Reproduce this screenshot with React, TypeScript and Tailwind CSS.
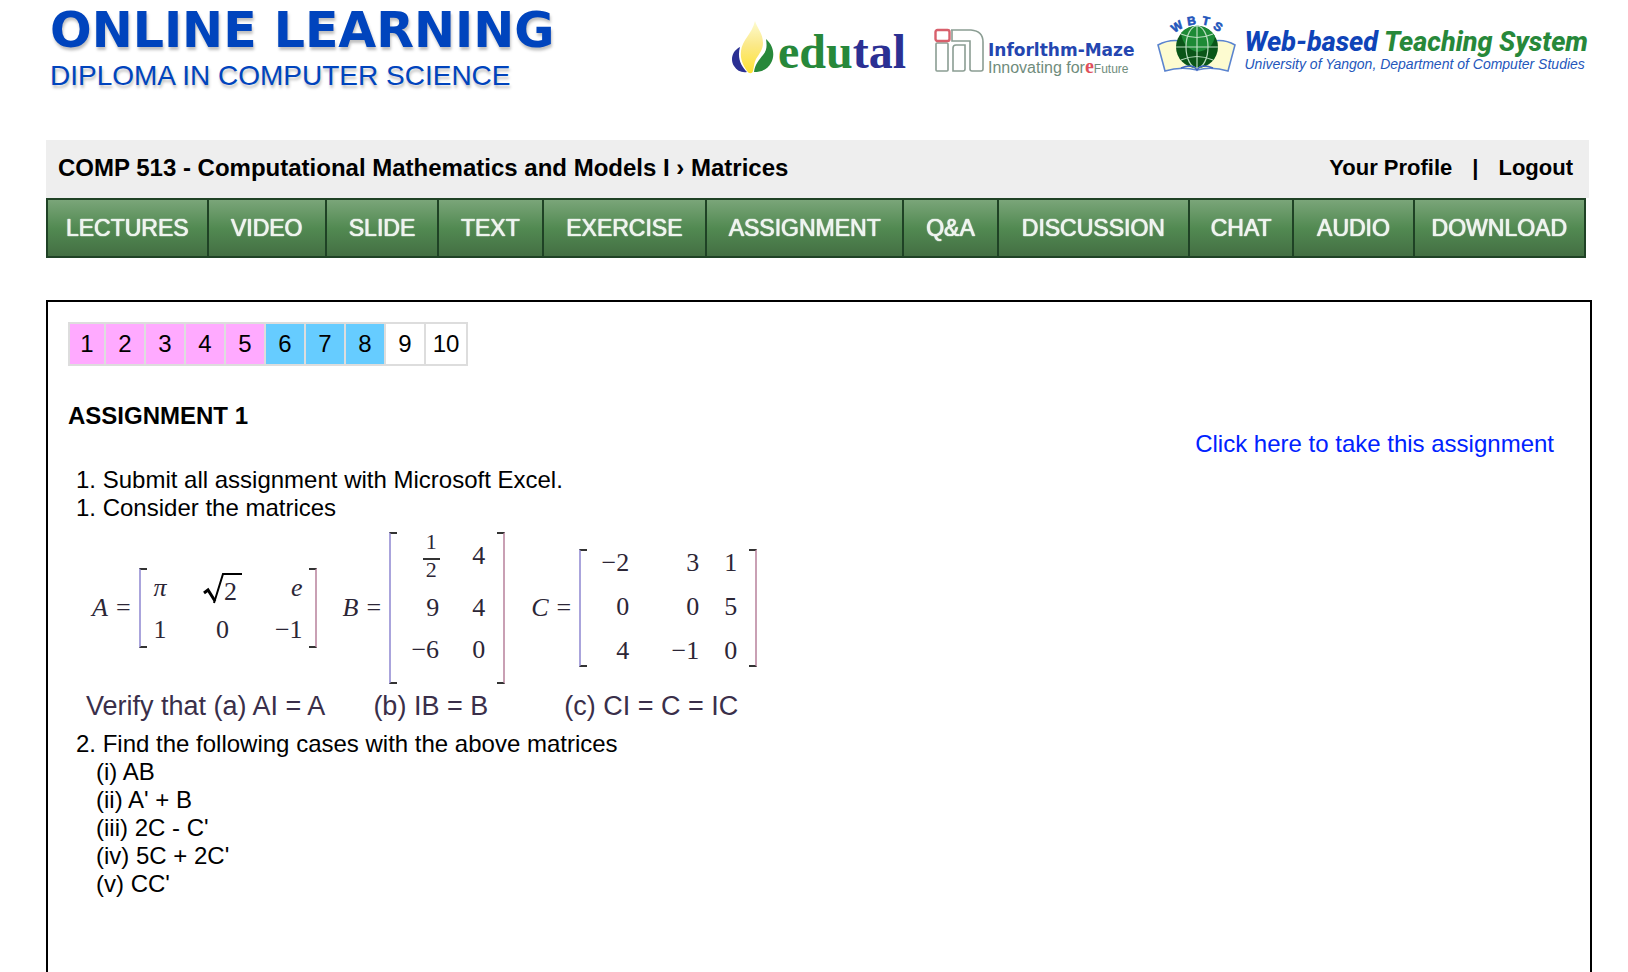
import type { ReactNode } from "react";

const tabs = [
  { label: "LECTURES", weight: 161 },
  { label: "VIDEO", weight: 118 },
  { label: "SLIDE", weight: 112 },
  { label: "TEXT", weight: 104 },
  { label: "EXERCISE", weight: 164 },
  { label: "ASSIGNMENT", weight: 198 },
  { label: "Q&A", weight: 94 },
  { label: "DISCUSSION", weight: 192 },
  { label: "CHAT", weight: 104 },
  { label: "AUDIO", weight: 120 },
  { label: "DOWNLOAD", weight: 172 },
];

const pages = [
  { n: 1, style: "w-[38px] bg-[#ffaaff]" },
  { n: 2, style: "w-[42px] bg-[#ffaaff]" },
  { n: 3, style: "w-[42px] bg-[#ffaaff]" },
  { n: 4, style: "w-[42px] bg-[#ffaaff]" },
  { n: 5, style: "w-[42px] bg-[#ffaaff]" },
  { n: 6, style: "w-[42px] bg-[#66ccff]" },
  { n: 7, style: "w-[42px] bg-[#66ccff]" },
  { n: 8, style: "w-[42px] bg-[#66ccff]" },
  { n: 9, style: "w-[42px] bg-white" },
  { n: 10, style: "w-[44px] bg-white" },
];

const cases = ["(i) AB", "(ii) A' + B", "(iii) 2C - C'", "(iv) 5C + 2C'", "(v) CC'"];

function EdutalMark() {
  return (
    <svg viewBox="0 0 42 54" className="h-[54px] w-[42px] shrink-0" aria-hidden="true">
      <defs>
        <linearGradient id="flame" x1="0" y1="0" x2="0" y2="1">
          <stop offset="0" stopColor="#fdfbd0" />
          <stop offset="0.45" stopColor="#fbe98a" />
          <stop offset="1" stopColor="#fde233" />
        </linearGradient>
      </defs>
      <path d="M8 27C0 31-2 40 2 46c3 5 8 7 13 6C9 46 5 38 8 27Z" fill="#2b3093" />
      <path d="M34 19c8 7 9 17 5 24-3 6-9 9-17 9 1-8 5-12 9-17 4-5 4-9 3-16Z" fill="#27883a" />
      <path d="M23 1c2 7 8 12 8 22 0 7-4 11-7 16-2 4-2 8-3 12-1 3-4 3-6 0C11 45 8 39 9 31 10 20 20 14 23 1Z" fill="url(#flame)" />
    </svg>
  );
}

function InforithmMark() {
  return (
    <svg viewBox="0 0 50 44" className="h-11 w-[50px] shrink-0" fill="none" stroke="#8b9d93" strokeWidth="1.6" aria-hidden="true">
      <rect x="2" y="15" width="12" height="28" rx="1" />
      <path d="M17 2H37Q49 3 49 14V41Q49 43 47 43H38Q36 43 36 41V13H18V2" />
      <path d="M19 43V20Q19 17 22 17H31V41Q31 43 29 43Z" />
      <rect x="1.500" y="2" width="14" height="11" rx="2" stroke="#d8606c" strokeWidth="2.400" />
    </svg>
  );
}

function GlobeMark() {
  return (
    <svg viewBox="0 0 80 58" className="h-[58px] w-20 shrink-0 overflow-visible" aria-hidden="true">
      <path d="M1 29Q12 23 24 25Q36 28 40 34Q44 28 56 25Q68 23 78 29L71 55Q55 50 40 54Q24 50 8 55Z" fill="#fdfbd0" stroke="#5b84cf" strokeWidth="1.600" />
      <circle cx="40" cy="31" r="21" fill="#0a5518" />
      <path d="M24 17A21 21 0 0 1 58 20Q56 34 40 36Q26 32 24 17Z" fill="#1d8a35" />
      <g fill="none" stroke="#b9dcbf" strokeWidth="1.200">
        <path d="M40 10V52M19 31H61" />
        <ellipse cx="40" cy="31" rx="11" ry="21" />
        <path d="M24 18Q40 25 56 18M24 44Q40 37 56 44" />
      </g>
      <path d="M24 52Q36 47 40 54Q44 47 56 52" fill="none" stroke="#3f62c0" strokeWidth="1.500" />
      <g fill="#2456bb" stroke="#2456bb" strokeWidth="0.6" fontFamily="Liberation Sans" fontWeight="700" fontSize="12" textAnchor="middle">
        <text transform="translate(22 14) rotate(-32)">W</text>
        <text transform="translate(35 9) rotate(-8)">B</text>
        <text transform="translate(48 9) rotate(12)">T</text>
        <text transform="translate(59 14) rotate(32)">S</text>
      </g>
    </svg>
  );
}

function Root() {
  return (
    <svg viewBox="0 0 38 32" className="mx-auto block h-8 w-[38px] overflow-visible" aria-hidden="true">
      <path d="M0 21L4 18L11 29" fill="none" stroke="#000" strokeWidth="3" />
      <path d="M10 31L19 2H38" fill="none" stroke="#000" strokeWidth="2" />
      <text x="20" y="28" fontFamily="Liberation Serif" fontSize="26" fill="#2c2636">2</text>
    </svg>
  );
}

function Fraction() {
  return (
    <span className="ml-auto flex w-4 flex-col items-center text-[22px]/5">
      <span className="border-b-2 border-[#333] px-[3px] pb-1.5">1</span>
      <span>2</span>
    </span>
  );
}

type MatrixProps = { name: string; size: string; pad?: string; rows: ReactNode[][]; cell: string[] };

function Matrix({ name, size, pad = "", rows, cell }: MatrixProps) {
  return (
    <div className="flex items-center font-['Liberation_Serif',serif] text-[26px]/7 text-[#2c2636]">
      <span className="italic">{name}</span>
      <span className="mx-2">=</span>
      <div className={`flex items-stretch ${size}`}>
        <span className="w-2 border-2 border-r-0 border-x-[#aaa4dc] border-y-[#333]" />
        <div className={`flex-1 ${pad}`}>
          <table className="w-full">
            <tbody>
              {rows.map((row, r) => (
                <tr key={r}>
                  {row.map((value, c) => (
                    <td key={c} className={`align-middle ${cell[c]}`}>
                      {value}
                    </td>
                  ))}
                </tr>
              ))}
            </tbody>
          </table>
        </div>
        <span className="w-2 border-2 border-l-0 border-x-[#c9a0b4] border-y-[#333]" />
      </div>
    </div>
  );
}

export default function App() {
  return (
    <div className="flex min-h-screen flex-col bg-white pl-[46px] pr-9 font-['Liberation_Sans',Arial,sans-serif] text-2xl/7 text-black">
      <header className="flex h-[140px] items-start justify-between pr-1">
        <div className="pl-1 text-[#0044bd] [text-shadow:1px_3px_3px_rgba(0,0,0,0.25)]">
          <h1 className="pt-1.5 font-['DejaVu_Sans',sans-serif] text-[49px]/[50px] font-bold">ONLINE LEARNING</h1>
          <p className="pt-1 text-[28px]/8">DIPLOMA IN COMPUTER SCIENCE</p>
        </div>
        <div className="flex items-start pt-4">
          <div className="flex items-start pt-1">
            <EdutalMark />
            <span className="pl-1 pt-1.5 font-['Liberation_Serif',serif] text-[48px]/[52px] font-bold text-[#27883a]">
              edu<span className="text-[#2b3093]">tal</span>
            </span>
          </div>
          <div className="ml-7 flex items-start gap-1 pt-3">
            <InforithmMark />
            <div className="pt-3.5">
              <p className="font-['DejaVu_Sans',sans-serif] text-[17px]/4 font-bold text-[#2446b0]">Inforlthm-Maze</p>
              <p className="flex items-baseline text-base/4 text-[#6f8c7c]">
                <span>Innovating for</span>
                <span className="font-['Liberation_Serif',serif] text-xl/4 font-bold text-[#e0505c]">e</span>
                <span className="text-xs/4">Future</span>
              </p>
            </div>
          </div>
          <div className="ml-[22px] flex items-start gap-2">
            <GlobeMark />
            <div className="pt-3 italic">
              <p className="font-[Roboto,sans-serif] text-[27px]/7 font-extrabold text-[#0f44b8]">
                Web-based <span className="text-[#27883a]">Teaching System</span>
              </p>
              <p className="text-sm/4 text-[#2456bb]">University of Yangon, Department of Computer Studies</p>
            </div>
          </div>
        </div>
      </header>

      <div className="mr-[3px] flex h-[58px] items-center justify-between bg-[#eeeeee] px-3 pb-0.5 font-bold">
        <h2>COMP 513 - Computational Mathematics and Models I › Matrices</h2>
        <div className="flex gap-5 pr-1 text-[22px]">
          <a href="#profile">Your Profile</a>
          <span>|</span>
          <a href="#logout">Logout</a>
        </div>
      </div>

      <nav className="mr-1.5 flex h-[60px] border-2 border-r-0 border-[#1f4225] bg-linear-to-b from-[#7aa579] via-[#528a52] to-[#446f43]">
        {tabs.map((tab) => (
          <a
            key={tab.label}
            href={`#${tab.label.toLowerCase()}`}
            style={{ flexGrow: tab.weight }}
            className="flex basis-0 items-center justify-center border-r-2 border-[#1f4225] text-[23px] text-[#eef4ee] [text-shadow:0_0_1px_#fff,0_0_1px_#fff]"
          >
            {tab.label}
          </a>
        ))}
      </nav>

      <main className="mt-[42px] flex-1 border-2 border-b-0 border-black p-5">
        <div className="flex h-11">
          {pages.map((page) => (
            <a
              key={page.n}
              href={`#page-${page.n}`}
              className={`-mr-0.5 flex items-center justify-center border-2 border-[#dddddd] ${page.style}`}
            >
              {page.n}
            </a>
          ))}
        </div>

        <h3 className="mt-9 font-bold">ASSIGNMENT 1</h3>
        <p className="pr-4 text-right">
          <a href="#take" className="text-[#0022ff]">Click here to take this assignment</a>
        </p>

        <div className="mt-2 pl-2">
          <p>1. Submit all assignment with Microsoft Excel.</p>
          <p>1. Consider the matrices</p>
          <div className="flex h-[164px] items-center gap-[26px] pl-4 pt-2">
            <Matrix
              name="A"
              size="h-20 w-[178px]"
              pad="pt-1"
              cell={["w-5 pb-3 text-right", "w-[92px] pb-3 pl-5 text-center", "pb-3 pr-1.5 text-right"]}
              rows={[[<i>π</i>, <Root />, <i>e</i>], ["1", "0", "−1"]]}
            />
            <Matrix
              name="B"
              size="h-[152px] w-[116px]"
              cell={["w-[42px] pb-3.5 text-right", "pb-3.5 pr-3 text-right"]}
              rows={[[<Fraction />, "4"], ["9", "4"], ["−6", "0"]]}
            />
            <Matrix
              name="C"
              size="h-[118px] w-[178px]"
              cell={["w-[42px] pb-4 text-right", "pb-4 text-right", "w-[50px] pb-4 pr-3 text-right"]}
              rows={[["−2", "3", "1"], ["0", "0", "5"], ["4", "−1", "0"]]}
            />
          </div>
          <p className="mb-1 flex h-10 items-center gap-12 pl-2.5 text-[27px] text-[#3a2f4a]">
            <span>Verify that (a) AI = A</span>
            <span>(b) IB = B</span>
            <span className="pl-7">(c) CI = C = IC</span>
          </p>
          <p>2. Find the following cases with the above matrices</p>
          <ul className="pl-5">
            {cases.map((item) => (
              <li key={item}>{item}</li>
            ))}
          </ul>
        </div>
      </main>
    </div>
  );
}
